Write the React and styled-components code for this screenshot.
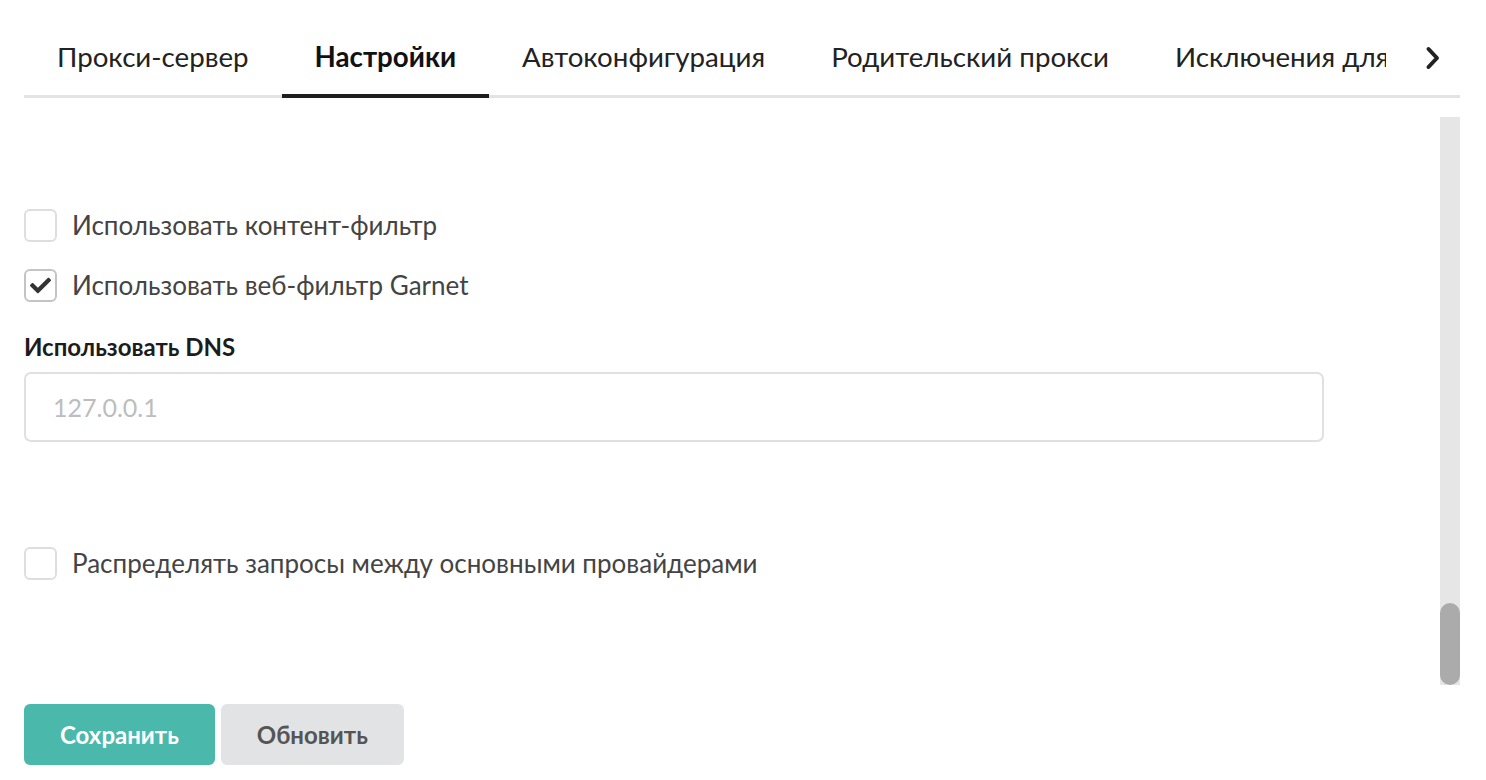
import React from 'react';
import styled, { createGlobalStyle } from 'styled-components';
import { FaCheck } from 'react-icons/fa';

const GlobalStyle = createGlobalStyle`
  html, body {
    margin: 0;
    padding: 0;
    background: #fff;
    font-family: Lato, "Noto Sans", sans-serif;
  }
  * { box-sizing: border-box; }
`;

const Page = styled.div`
  width: 1486px;
  height: 780px;
  padding: 0 26px 0 24px;
  display: flex;
  flex-direction: column;
  overflow: hidden;
`;

const TabsBar = styled.div`
  display: flex;
  align-items: flex-start;
  border-bottom: 3px solid #e3e3e3;
`;

// the last tab is cut by the arrow, as in the app
const TabsViewport = styled.div`
  display: flex;
  width: 1362px;
  margin-bottom: -3px;
  overflow: hidden;
`;

const Tab = styled.div`
  flex: none;
  padding: 41px 33px 21px;
  font-size: 27.7px;
  line-height: 32px;
  white-space: nowrap;
  color: ${p => (p.active ? '#111' : '#222')};
  font-weight: ${p => (p.active ? 700 : 400)};
  border-bottom: 4px solid ${p => (p.active ? '#1e1e1e' : 'transparent')};
`;

const TabArrow = styled.div`
  flex: 1;
  display: flex;
  align-items: center;
  justify-content: center;
  height: 95px;
  padding-top: 20px;
  padding-left: 20px;
`;

const Body = styled.div`
  display: flex;
  margin-top: 19px;
  height: 568px;
`;

const Content = styled.div`
  flex: 1;
  padding-top: 92px;
`;

const ScrollTrack = styled.div`
  width: 20px;
  background: #e6e6e6;
  display: flex;
  flex-direction: column;
`;

const ScrollThumb = styled.div`
  margin-top: auto;
  height: 82px;
  border-radius: 10px;
  background: #ababab;
`;

const CheckRow = styled.label`
  display: flex;
  align-items: center;
  gap: 15px;
  margin-top: ${p => p.gap || 0}px;
  font-size: 26px;
  line-height: 33px;
  color: #444;
`;

const Box = styled.span`
  flex: none;
  width: 33px;
  height: 33px;
  border-radius: 6px;
  border: 2px solid ${p => (p.checked ? '#c4c4c4' : '#dedede')};
  background: #fff;
  color: #333;
  display: flex;
  align-items: center;
  justify-content: center;
`;

const FieldLabel = styled.div`
  margin-top: 31px;
  font-size: 24px;
  line-height: 28px;
  font-weight: 700;
  color: #1c1c1c;
`;

const Input = styled.input`
  display: block;
  margin-top: 11px;
  width: 1300px;
  height: 70px;
  border: 2px solid #e0e0e0;
  border-radius: 7px;
  padding: 0 27px;
  font-family: Lato, "Noto Sans", sans-serif;
  font-size: 25px;
  color: #333;
  outline: none;
  &::placeholder { color: #bdbdbd; }
`;

const Actions = styled.div`
  display: flex;
  gap: 6px;
  margin-top: 19px;
`;

const Button = styled.button`
  height: 61px;
  padding: 0 36px;
  border: none;
  border-radius: 6px;
  font-family: Lato, "Noto Sans", sans-serif;
  font-size: 24px;
  font-weight: 700;
  background: ${p => (p.primary ? '#4bb8ac' : '#e2e3e5')};
  color: ${p => (p.primary ? '#fff' : '#555')};
`;

const Check = ({ checked }) => (
  <Box checked={checked}>
    {checked && <FaCheck size={21} />}
  </Box>
);

const tabs = ['Прокси-сервер', 'Настройки', 'Автоконфигурация', 'Родительский прокси', 'Исключения для прокси'];

export default function App() {
  return (
    <>
      <GlobalStyle />
      <Page>
        <TabsBar>
          <TabsViewport>
            {tabs.map((t, i) => (
              <Tab key={t} active={i === 1}>{t}</Tab>
            ))}
          </TabsViewport>
          <TabArrow>
            <svg width="16" height="24" viewBox="0 0 16 24">
              <path d="M3.5 3 L12 12 L3.5 21" fill="none" stroke="#222" strokeWidth="4" strokeLinecap="round" strokeLinejoin="round" />
            </svg>
          </TabArrow>
        </TabsBar>
        <Body>
          <Content>
            <CheckRow><Check />Использовать контент-фильтр</CheckRow>
            <CheckRow gap={27}><Check checked />Использовать веб-фильтр Garnet</CheckRow>
            <FieldLabel>Использовать DNS</FieldLabel>
            <Input placeholder="127.0.0.1" />
            <CheckRow gap={105}><Check />Распределять запросы между основными провайдерами</CheckRow>
          </Content>
          <ScrollTrack>
            <ScrollThumb />
          </ScrollTrack>
        </Body>
        <Actions>
          <Button primary>Сохранить</Button>
          <Button>Обновить</Button>
        </Actions>
      </Page>
    </>
  );
}
